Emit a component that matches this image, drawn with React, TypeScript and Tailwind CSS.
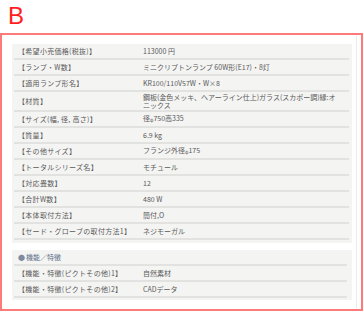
import React from "react";

type Spec = { label: string; value: React.ReactNode };

const Phi = () => <span className="text-[4.5px] align-[-1px]">φ</span>;

const specs: Spec[] = [
  { label: "【希望小売価格(税抜)】", value: "113000 円" },
  { label: "【ランプ・W数】", value: "ミニクリプトンランプ 60W形(E17)・8灯" },
  { label: "【適用ランプ形名】", value: "KR100/110V57W・W×8" },
  {
    label: "【材質】",
    value: (
      <>
        鋼板(金色メッキ、ヘアーライン仕上)ガラス(スカボー調)縁:オ
        <br />
        ニックス
      </>
    ),
  },
  {
    label: "【サイズ(幅, 径, 高さ)】",
    value: (
      <>
        径<Phi />750高335
      </>
    ),
  },
  { label: "【質量】", value: "6.9 kg" },
  {
    label: "【その他サイズ】",
    value: (
      <>
        フランジ外径<Phi />175
      </>
    ),
  },
  { label: "【トータルシリーズ名】", value: "モチュール" },
  { label: "【対応畳数】", value: "12" },
  { label: "【合計W数】", value: "480 W" },
  { label: "【本体取付方法】", value: "簡付,O" },
  { label: "【セード・グローブの取付方法1】", value: "ネジモーガル" },
];

const features: Spec[] = [
  { label: "【機能・特徴(ピクトその他)1】", value: "自然素材" },
  { label: "【機能・特徴(ピクトその他)2】", value: "CADデータ" },
];

const Row = ({ label, value }: Spec) => (
  <div className="flex items-center min-h-[16px] py-px border-b-2 border-[#e2e2e0]">
    <div className="w-[129px] shrink-0 pl-[4px] tracking-[0.3px]">{label}</div>
    <div className="flex-1 pr-[2px]">{value}</div>
  </div>
);

export default function App() {
  return (
    <div
      className="w-[363px] h-[312px] bg-white"
      style={{ fontFamily: '"Liberation Sans", Arial, sans-serif' }}
    >
      {/* section letter */}
      <div className="h-[33px] pl-[8px] pt-[4px] text-[24px] leading-[24px] text-[#ff1e1e]">
        B
      </div>

      <div className="border-2 border-[#ff7b7b] h-[278px]">
        <div
          className="mr-[4px] border-r border-[#ececec] pt-[9px] pb-[9px] pl-[10px] pr-[4px] text-[7px] leading-[8px] text-[#5a5a5a]"
          style={{ fontFamily: '"Noto Sans CJK JP", "Liberation Sans", sans-serif' }}
        >
          {/* spec table */}
          <div className="bg-[#f4f4f3] pl-[2px] pr-[3px] pb-[3px]">
            {specs.map((s) => (
              <Row key={s.label} {...s} />
            ))}
          </div>

          {/* features table */}
          <div className="mt-[7px] bg-[#f4f4f3] pl-[2px] pr-[5px] pb-[2px]">
            <div className="flex items-center min-h-[16px] py-px border-b-2 border-[#e2e2e0] pl-[4px] text-[#61708a]">
              <span className="text-[#7d8aa0] mr-px">●</span>機能／特徴
            </div>
            {features.map((s) => (
              <Row key={s.label} {...s} />
            ))}
          </div>
        </div>
      </div>
    </div>
  );
}
